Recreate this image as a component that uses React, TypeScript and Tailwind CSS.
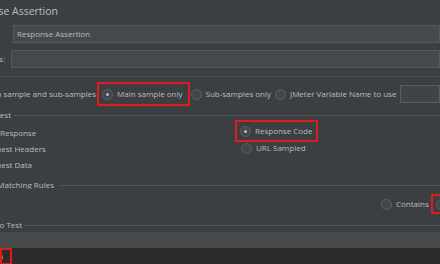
const Radio = ({ on = false }: { on?: boolean }) => (
  <span className="flex h-[11px] w-[11px] shrink-0 items-center justify-center rounded-full border border-[#5e6163] bg-[#43474a]">
    {on && <span className="h-[3px] w-[3px] rounded-full bg-[#bbbbbb]" />}
  </span>
);

const Option = ({ label, on = false }: { label: string; on?: boolean }) => (
  <span className="flex items-center gap-[4px] whitespace-nowrap">
    <Radio on={on} />
    <span>{label}</span>
  </span>
);

// label cut off on the left side of the screenshot
const Clipped = ({ w, children, className = '' }: { w: string; children: React.ReactNode; className?: string }) => (
  <div className={`flex shrink-0 justify-end overflow-hidden whitespace-nowrap ${w} ${className}`}>{children}</div>
);

const TitledLine = ({ w, label, gap }: { w: string; label: string; gap: string }) => (
  <div className={`flex h-[10px] items-center ${gap}`}>
    <Clipped w={w}>{label}</Clipped>
    <div className="h-px flex-1 bg-[#515456]" />
  </div>
);

export default function App() {
  return (
    <div className="h-[264px] w-[440px] overflow-hidden bg-[#3c3f41] font-['Open_Sans',sans-serif] text-[8px] leading-none text-[#bbbbbb]">
      {/* title */}
      <div className="flex h-[22px] items-center">
        <Clipped w="w-[58px]" className="text-[10.5px]">Response Assertion</Clipped>
      </div>

      {/* name / comments */}
      <div className="mt-[3px] flex h-[18px]">
        <div className="w-[13px] shrink-0" />
        <div className="flex flex-1 items-center border border-[#55595b] bg-[#45494a] px-[3px]">Response Assertion</div>
      </div>
      <div className="mt-[7px] flex h-[18px] items-center">
        <Clipped w="w-[5px]">Comments:</Clipped>
        <div className="w-[6px] shrink-0" />
        <div className="h-full flex-1 border border-[#55595b] bg-[#45494a]" />
      </div>

      <div className="mt-[8px] h-px bg-[#4a4d4f]" />

      {/* apply to */}
      <div className="mt-[5px] flex h-[24px] items-center whitespace-nowrap">
        <Clipped w="w-[97px]" className="pr-[1px]">
          <span className="flex items-center gap-[4px]">
            Apply to:
            <Option label="Main sample and sub-samples" />
          </span>
        </Clipped>
        <div className="flex h-full items-center border-2 border-[#e01b1b] px-[3px] pr-[5px]">
          <Option label="Main sample only" on />
        </div>
        <div className="ml-[1px] flex items-center gap-[4px]">
          <Option label="Sub-samples only" />
          <Option label="JMeter Variable Name to use" />
        </div>
        <div className="ml-[4px] h-[18px] flex-1 border border-[#5a5d5f] bg-[#414446]" />
      </div>

      {/* field to test */}
      <div className="mt-[4px]">
        <TitledLine w="w-[11px]" label="Field to Test" gap="gap-[3px]" />
      </div>
      <div className="flex h-[53px]">
        <div className="w-[235px] shrink-0 overflow-hidden pt-[5px]">
          <div className="-ml-[33px] flex flex-col">
            <div className="flex h-[16px] items-center"><Option label="Text Response" /></div>
            <div className="flex h-[16px] items-center"><Option label="Request Headers" /></div>
            <div className="flex h-[16px] items-center"><Option label="Request Data" /></div>
          </div>
        </div>
        <div className="flex flex-col">
          <div className="flex h-[22px] items-center border-2 border-[#e01b1b] px-[3px] pr-[4px]">
            <Option label="Response Code" on />
          </div>
          <div className="ml-[6px] flex h-[12px] items-center">
            <Option label="URL Sampled" />
          </div>
        </div>
      </div>

      {/* matching rules */}
      <div className="mt-[7px]">
        <TitledLine w="w-[54px]" label="Pattern Matching Rules" gap="gap-[6px]" />
      </div>
      <div className="mt-[4px] flex h-[20px] items-center whitespace-nowrap pl-[381px]">
        <Option label="Contains" />
        <div className="ml-[2px] flex h-full items-center border-2 border-[#e01b1b] px-[3px]">
          <Option label="Matches" on />
        </div>
      </div>

      {/* patterns to test */}
      <div className="mt-[6px]">
        <TitledLine w="w-[22px]" label="Patterns to Test" gap="gap-[2px]" />
      </div>
      <div className="mt-[2px] h-[18px] bg-[#45494a]" />
      <div className="h-[20px] bg-[#2b2b2b]">
        <div className="-mt-[2px] flex h-[17px] w-[12px] items-center justify-end overflow-hidden border-2 border-[#e01b1b] pr-[7px] whitespace-nowrap">
          200
        </div>
      </div>
    </div>
  );
}
